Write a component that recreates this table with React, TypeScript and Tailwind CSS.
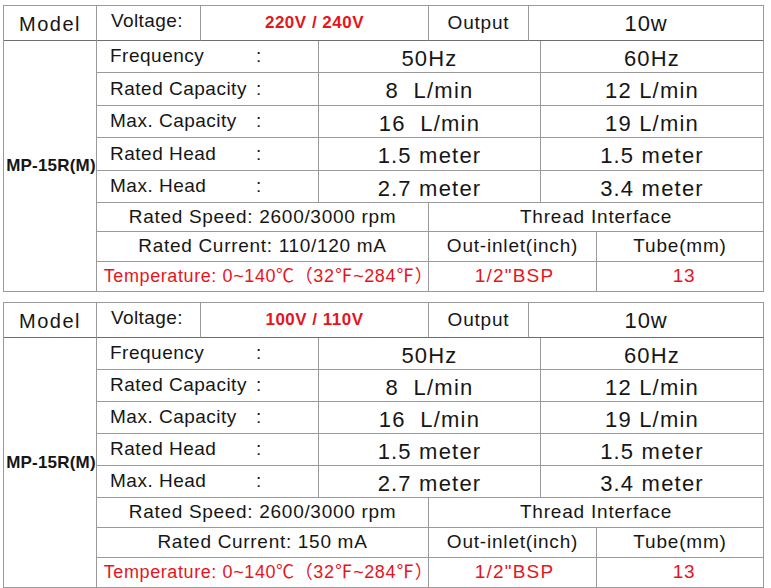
import React from 'react'

type Spec = { label: string; a: string; b: string }

const SPECS: Spec[] = [
  { label: 'Frequency', a: '50Hz', b: '60Hz' },
  { label: 'Rated Capacity', a: '8  L/min', b: '12 L/min' },
  { label: 'Max. Capacity', a: '16  L/min', b: '19 L/min' },
  { label: 'Rated Head', a: '1.5 meter', b: '1.5 meter' },
  { label: 'Max. Head', a: '2.7 meter', b: '3.4 meter' },
]

const cell = 'border-r border-b border-[#9a9a9a] flex items-center min-w-0'
const head = 'border-r border-b border-r-[#9a9a9a] border-b-[#6e6e6e] flex items-center min-w-0'

function PumpTable({ voltage, current, rows }: { voltage: string; current: string; rows: string }) {
  return (
    <div
      className={`grid grid-cols-[93px_104px_118px_110px_100px_12px_56px_167px] ${rows} border-l border-t border-[#9a9a9a] ml-[3px] w-[761px] text-[#161616] whitespace-nowrap`}
    >
      {/* header */}
      <div className={`${head} justify-center text-[20px] tracking-[1.5px] pt-[2px]`}>Model</div>
      <div className={`${head} pl-[14px] text-[19px] tracking-[0.4px] pb-[3px]`}>Voltage:</div>
      <div className={`${head} col-span-2 justify-center text-[17px] font-bold tracking-[0.5px] text-[#e8141c]`}>
        {voltage}
      </div>
      <div className={`${head} justify-center text-[19px] tracking-[0.8px]`}>Output</div>
      <div className={`${head} col-span-3 justify-center text-[22px] tracking-[0.8px]`}>10w</div>

      {/* model */}
      <div className={`${cell} row-span-8 justify-center text-[17px] font-bold tracking-[0.2px] pl-[2px]`}>
        MP-15R(M)
      </div>

      {SPECS.map(s => (
        <React.Fragment key={s.label}>
          <div className={`${cell} col-span-2 pl-[13px] text-[19px] tracking-[0.5px]`}>
            <span className="w-[146px]">{s.label}</span>
            <span>:</span>
          </div>
          <div className={`${cell} col-span-3 justify-center text-[22px] tracking-[1.2px] whitespace-pre pt-[3px]`}>
            {s.a}
          </div>
          <div className={`${cell} col-span-2 justify-center text-[22px] tracking-[1.2px] whitespace-pre pt-[3px]`}>
            {s.b}
          </div>
        </React.Fragment>
      ))}

      <div className={`${cell} col-span-3 justify-center text-[19px] tracking-[0.7px]`}>
        Rated Speed: 2600/3000 rpm
      </div>
      <div className={`${cell} col-span-4 justify-center text-[19px] tracking-[0.8px]`}>Thread Interface</div>

      <div className={`${cell} col-span-3 justify-center text-[19px] tracking-[0.7px]`}>{current}</div>
      <div className={`${cell} col-span-3 justify-center text-[19px] tracking-[0.8px]`}>Out-inlet(inch)</div>
      <div className={`${cell} justify-center text-[19px] tracking-[0.8px]`}>Tube(mm)</div>

      <div className={`${cell} col-span-3 justify-center text-[18px] tracking-[0.6px] text-[#e8141c] pl-[12px]`}>
        Temperature: 0~140℃（32℉~284℉）
      </div>
      <div className={`${cell} col-span-3 justify-center text-[19px] tracking-[1.2px] text-[#e8141c] pl-[4px]`}>
        1/2"BSP
      </div>
      <div className={`${cell} justify-center text-[19px] tracking-[0.8px] text-[#e8141c] pl-[8px]`}>13</div>
    </div>
  )
}

export default function App() {
  return (
    <div
      className="w-[771px] h-[588px] overflow-hidden bg-white pt-[5px] flex flex-col gap-[10px]"
      style={{ fontFamily: '"Liberation Sans", Arial, "Noto Sans CJK SC", sans-serif' }}
    >
      <PumpTable
        voltage="220V / 240V"
        current="Rated Current: 110/120 mA"
        rows="grid-rows-[35px_32px_33px_32px_33px_32px_29px_30px_30px]"
      />
      <PumpTable
        voltage="100V / 110V"
        current="Rated Current: 150 mA"
        rows="grid-rows-[35px_32px_32px_32px_32px_32px_30px_30px_30px]"
      />
    </div>
  )
}
